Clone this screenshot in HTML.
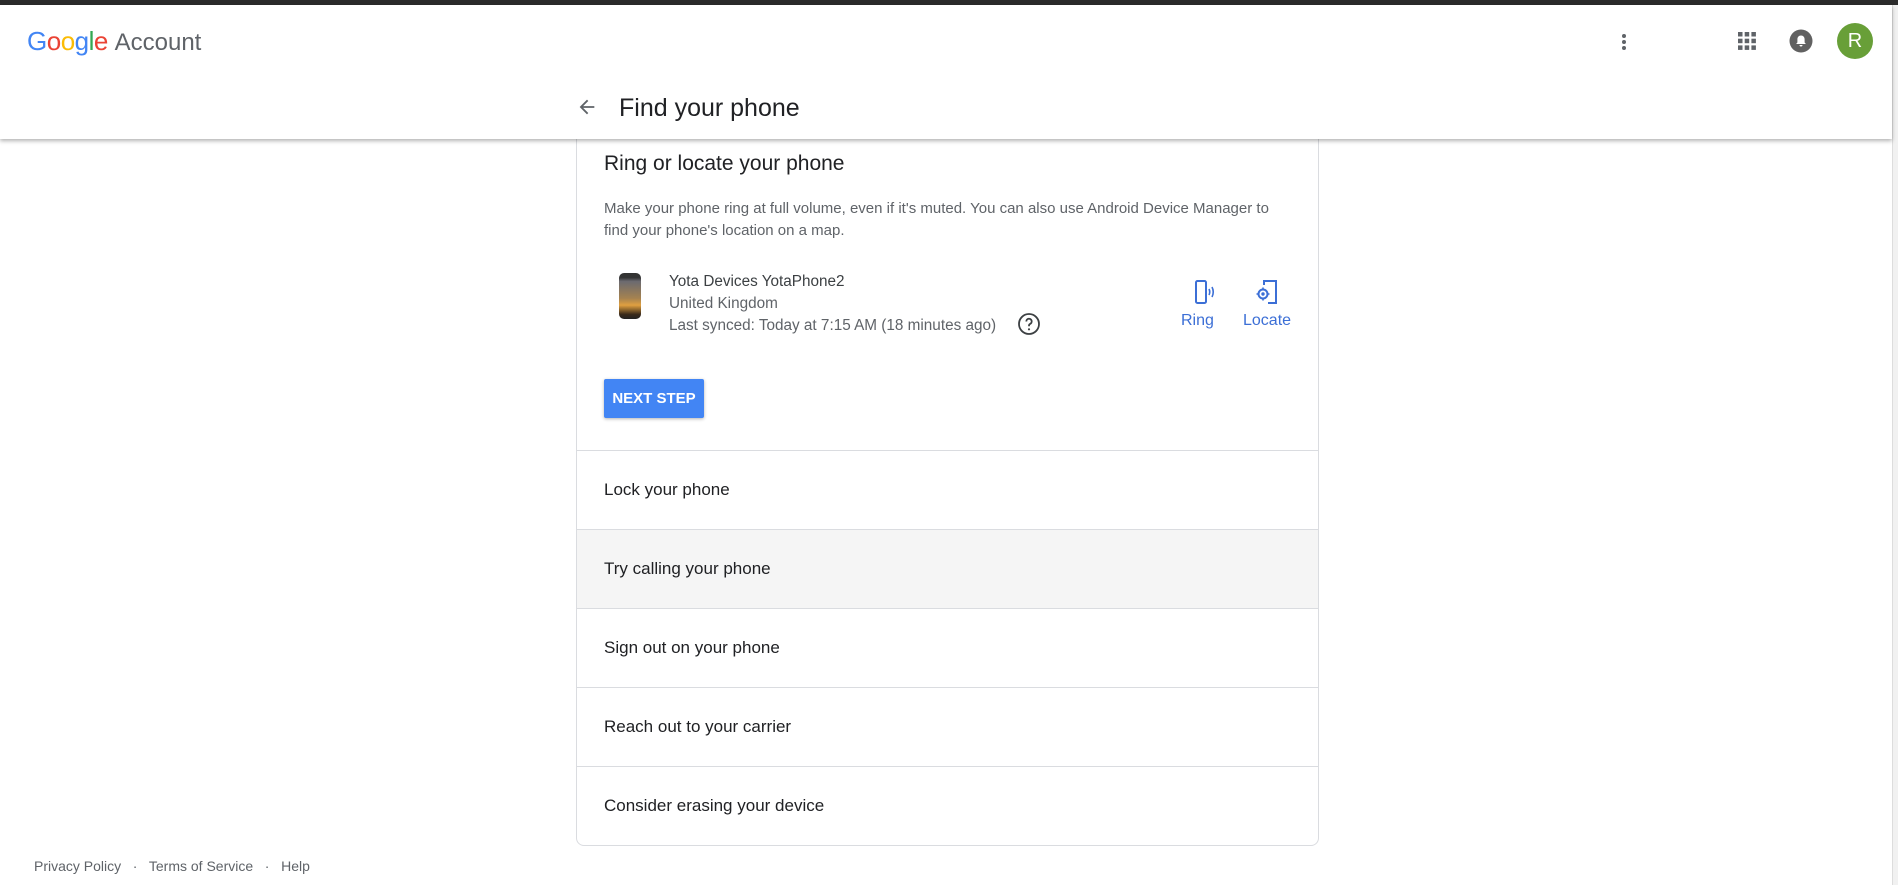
<!DOCTYPE html>
<html><head><meta charset="utf-8"><style>
*{box-sizing:border-box;margin:0;padding:0}
body{width:1898px;height:885px;overflow:hidden;background:#fff;font-family:"Liberation Sans",Arial,sans-serif;position:relative;color:#202124}
.top{position:absolute;left:0;top:0;width:1898px;height:5px;background:#2b2b2b}
.hdr{position:absolute;left:0;top:5px;width:1892px;height:134px;background:#fff;box-shadow:0 2px 4px rgba(0,0,0,.3);z-index:2}
.sb{position:absolute;right:0;top:5px;width:6px;height:880px;background:#f1f1f1;border-left:1px solid #ddd}
.abs{position:absolute}
.card{position:absolute;left:576px;top:100px;width:743px;height:746px;border:1px solid #dadce0;border-radius:8px;background:#fff;overflow:hidden}
.row{position:absolute;left:0;width:741px;height:79px;border-top:1px solid #dadce0;font-size:17px;line-height:78px;padding-left:27px;color:#202124}
.blue{color:#3c6fd6}
</style></head><body>
<div class="top"></div>
<div class="sb"></div>
<div class="hdr">
 <div class="abs" style="left:27px;top:21px;font-size:26px;letter-spacing:-0.5px"><span style="color:#4285f4">G</span><span style="color:#ea4335">o</span><span style="color:#fbbc05">o</span><span style="color:#4285f4">g</span><span style="color:#34a853">l</span><span style="color:#ea4335">e</span> <span style="color:#5f6368;font-size:24px;letter-spacing:0">Account</span></div>
 <svg class="abs" style="left:576px;top:91px" width="22" height="22" viewBox="0 0 24 24"><path d="M20 11H7.8l5.6-5.6L12 4l-8 8 8 8 1.4-1.4L7.8 13H20z" fill="#5f6368"/></svg>
 <div class="abs" style="left:619px;top:89px;font-size:25px;color:#202124">Find your phone</div>
 <svg class="abs" style="left:1612px;top:25px" width="24" height="24" viewBox="0 0 24 24"><circle cx="12" cy="6" r="2" fill="#5f6368"/><circle cx="12" cy="12" r="2" fill="#5f6368"/><circle cx="12" cy="18" r="2" fill="#5f6368"/></svg>
 <svg class="abs" style="left:1737px;top:26px" width="20" height="20" viewBox="0 0 20 20" fill="#5f6368"><rect x="1" y="1" width="4.5" height="4.5"/><rect x="7.7" y="1" width="4.5" height="4.5"/><rect x="14.4" y="1" width="4.5" height="4.5"/><rect x="1" y="7.7" width="4.5" height="4.5"/><rect x="7.7" y="7.7" width="4.5" height="4.5"/><rect x="14.4" y="7.7" width="4.5" height="4.5"/><rect x="1" y="14.4" width="4.5" height="4.5"/><rect x="7.7" y="14.4" width="4.5" height="4.5"/><rect x="14.4" y="14.4" width="4.5" height="4.5"/></svg>
 <svg class="abs" style="left:1789px;top:24px" width="24" height="24" viewBox="0 0 24 24"><circle cx="12" cy="12" r="11.5" fill="#616161"/><path d="M12 6.5c-2.2 0-3.6 1.7-3.6 3.8v3.2l-1.3 1.5h9.8l-1.3-1.5v-3.2c0-2.1-1.4-3.8-3.6-3.8z M10.5 16h3a1.5 1.5 0 0 1-3 0z" fill="#fff"/></svg>
 <div class="abs" style="left:1837px;top:18px;width:36px;height:36px;border-radius:50%;background:#689f38;color:#fff;font-size:20px;text-align:center;line-height:36px">R</div>
</div>
<div class="card">
 <div class="abs" style="left:27px;top:51px;font-size:21px;color:#202124">Ring or locate your phone</div>
 <div class="abs" style="left:27px;top:97px;width:668px;font-size:15px;line-height:22px;color:#5f6368">Make your phone ring at full volume, even if it's muted. You can also use Android Device Manager to find your phone's location on a map.</div>
 <div class="abs" style="left:42px;top:172px;width:22px;height:46px;border-radius:5px;background:linear-gradient(#333 0,#333 10%,#6b6a70 18%,#a58250 55%,#e0a040 70%,#3a2a1a 90%,#222 100%)"></div>
 <div class="abs" style="left:92px;top:170px;font-size:15.3px;line-height:22px;color:#3c4043">Yota Devices YotaPhone2<br><span style="color:#5f6368">United Kingdom<br>Last synced: Today at 7:15 AM (18 minutes ago)</span></div>
 <svg class="abs" style="left:440px;top:211px" width="24" height="24" viewBox="0 0 24 24"><circle cx="12" cy="12" r="10" fill="none" stroke="#3c4043" stroke-width="1.8"/><path d="M9.3 9.5a2.7 2.7 0 1 1 3.8 2.4c-.8.4-1.1.9-1.1 1.8v.6" fill="none" stroke="#3c4043" stroke-width="1.8"/><circle cx="12" cy="17.3" r="1.1" fill="#3c4043"/></svg>
 <svg class="abs" style="left:616px;top:178px" width="24" height="26" viewBox="0 0 24 26"><rect x="3" y="2" width="10" height="22" rx="1.5" fill="none" stroke="#3c6fd6" stroke-width="2"/><path d="M16 10q1.5 3 0 6M19 8q2.5 5 0 10" fill="none" stroke="#3c6fd6" stroke-width="1.6"/></svg>
 <div class="abs blue" style="left:604px;top:211px;font-size:16px">Ring</div>
 <svg class="abs" style="left:678px;top:178px" width="26" height="26" viewBox="0 0 26 26"><path d="M9 6V2h12v22H13" fill="none" stroke="#3c6fd6" stroke-width="2"/><circle cx="8" cy="15" r="4.5" fill="none" stroke="#3c6fd6" stroke-width="2"/><circle cx="8" cy="15" r="1.7" fill="#3c6fd6"/><path d="M8 8.5v2M8 19.5v2M1.5 15h2M12.5 15h2" stroke="#3c6fd6" stroke-width="1.6"/></svg>
 <div class="abs blue" style="left:666px;top:211px;font-size:16px">Locate</div>
 <div class="abs" style="left:27px;top:278px;width:100px;height:39px;background:#4285f4;border-radius:2px;box-shadow:0 1px 3px rgba(0,0,0,.3);color:#fff;font-weight:bold;font-size:15px;text-align:center;line-height:39px">NEXT STEP</div>
 <div class="row" style="top:349px">Lock your phone</div>
 <div class="row" style="top:428px;background:#f5f5f5">Try calling your phone</div>
 <div class="row" style="top:507px">Sign out on your phone</div>
 <div class="row" style="top:586px">Reach out to your carrier</div>
 <div class="row" style="top:665px">Consider erasing your device</div>
</div>
<div class="abs" style="left:34px;top:858px;font-size:14px;color:#5f6368;white-space:pre">Privacy Policy   ·   Terms of Service   ·   Help</div>
</body></html>
